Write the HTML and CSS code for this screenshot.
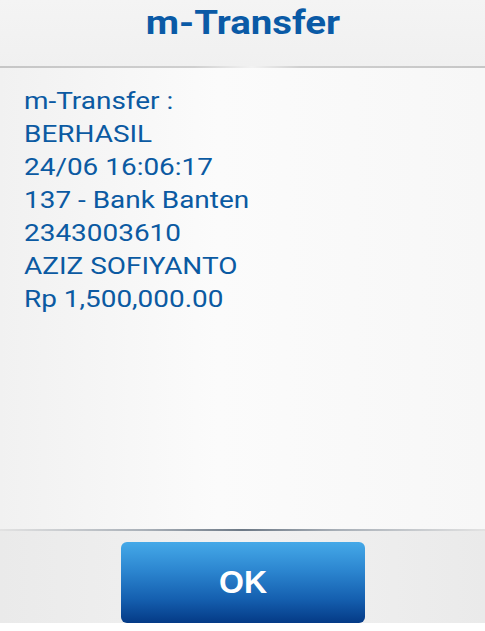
FILE: index.html
```html
<!DOCTYPE html>
<html lang="id">
<head>
  <meta charset="UTF-8" />
  <title>m-Transfer</title>
  <link rel="stylesheet" href="styles.css">
</head>
<body>
  <div class="dialog">
    <div class="dialog-title"><span>m-Transfer</span></div>
    <div class="rule rule-top"></div>

    <!-- isi pesan hasil transfer -->
    <div class="dialog-body">
      <div class="msg">
        <div>m-Transfer :</div>
        <div>BERHASIL</div>
        <div>24/06 16:06:17</div>
        <div>137 - Bank Banten</div>
        <div>2343003610</div>
        <div>AZIZ SOFIYANTO</div>
        <div>Rp 1,500,000.00</div>
      </div>
    </div>

    <div class="rule rule-bottom"></div>
    <div class="dialog-actions">
      <button type="button" class="ok-btn">OK</button>
    </div>
  </div>
</body>
</html>
```

FILE: styles.css
```css
html, body {
  margin: 0;
  padding: 0;
  background: #fff;
}

body {
  font-family: "Roboto", "Liberation Sans", sans-serif;
  width: 485px;
  height: 631px;
  overflow: hidden;
}

.dialog {
  height: 623px;
  display: flex;
  flex-direction: column;
  background: linear-gradient(to right, #efefef 0%, #f8f8f8 50%, #efefef 100%);
}

.dialog-title {
  height: 66px;
  text-align: center;
  font-size: 34px;
  font-weight: bold;
  color: #0a5aa6;
  line-height: 44px;
  background: linear-gradient(to bottom, #f4f4f4, #f0f0f0);
}

.dialog-title span {
  display: inline-block;
  transform: scaleX(1.13);
}

.rule {
  height: 2px;
}

.rule-top {
  background: linear-gradient(to right, #c6c6c6 0%, #cfcfcf 40%, #f2f2f2 52%, #cfcfcf 62%, #c6c6c6 100%);
}

.rule-bottom {
  background: linear-gradient(to right, #e2e2e2 0%, #a9b0b8 30%, #6d7986 50%, #a9b0b8 70%, #e2e2e2 100%);
}

.dialog-body {
  flex: 1;
  padding: 16px 24px 0;
  font-size: 24.5px;
  line-height: 33px;
  color: #0b5aa2;
  background: linear-gradient(to right, #f1f1f1 0%, #fbfbfb 45%, #f7f7f7 100%);
}

.msg {
  width: max-content;
  transform: scaleX(1.14);
  transform-origin: left top;
}

.dialog-actions {
  height: 92px;
  display: flex;
  justify-content: center;
  align-items: flex-end;
  background: linear-gradient(to right, #eaeaea 0%, #f2f2f2 50%, #eaeaea 100%);
}

.ok-btn {
  width: 244px;
  height: 81px;
  margin-left: 1px;
  border: none;
  border-radius: 6px;
  background: linear-gradient(to bottom, #45a9e8 0%, #2c86d0 35%, #1560b0 70%, #043a86 100%);
  color: #fff;
  font-family: "Liberation Sans", "Roboto", sans-serif;
  font-weight: bold;
  font-size: 32px;
  padding: 0;
}
```
